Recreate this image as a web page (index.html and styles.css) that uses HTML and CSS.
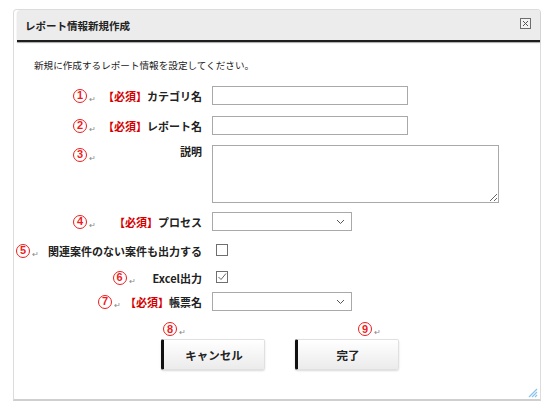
FILE: index.html
```html
<!DOCTYPE html>
<html lang="ja">
<head>
    <meta charset="UTF-8">
    <meta name="viewport" content="width=device-width, initial-scale=1.0">
    <title>レポート情報新規作成</title>
    <link rel="stylesheet" href="styles.css">
</head>
<body>
    <div class="dialog">
        <header class="dialog-header">
            <h1>レポート情報新規作成</h1>
            <span class="close-btn">
                <svg width="11" height="11" viewBox="0 0 11 11">
                    <rect x="0.5" y="0.5" width="10" height="10" fill="#f4f4f4" stroke="#6d6d6d"/>
                    <path d="M3 3 L8 8 M8 3 L3 8" stroke="#555" stroke-width="1"/>
                </svg>
            </span>
        </header>

        <div class="dialog-body">
            <p class="intro">新規に作成するレポート情報を設定してください。</p>

            <form class="report-form">
                <!-- row 1 -->
                <div class="label-cell spread">
                    <span class="note"><b>1</b><i>↵</i></span>
                    <label for="category"><em>【必須】</em>カテゴリ名</label>
                </div>
                <div class="control-cell">
                    <input type="text" id="category" class="text-input">
                </div>

                <!-- row 2 -->
                <div class="label-cell spread">
                    <span class="note"><b>2</b><i>↵</i></span>
                    <label for="reportName"><em>【必須】</em>レポート名</label>
                </div>
                <div class="control-cell">
                    <input type="text" id="reportName" class="text-input">
                </div>

                <!-- row 3 -->
                <div class="label-cell spread top">
                    <span class="note"><b>3</b><i>↵</i></span>
                    <label for="description">説明</label>
                </div>
                <div class="control-cell">
                    <textarea id="description" class="text-area"></textarea>
                </div>

                <!-- row 4 -->
                <div class="label-cell spread">
                    <span class="note"><b>4</b><i>↵</i></span>
                    <label for="process"><em>【必須】</em>プロセス</label>
                </div>
                <div class="control-cell">
                    <div class="select-box" id="process">
                        <svg width="9" height="6" viewBox="0 0 9 6"><path d="M1 1 L4.5 4.5 L8 1" fill="none" stroke="#555" stroke-width="1"/></svg>
                    </div>
                </div>

                <!-- row 5 -->
                <div class="label-cell">
                    <span class="note"><b>5</b><i>↵</i></span>
                    <label class="long-label">関連案件のない案件も出力する</label>
                </div>
                <div class="control-cell">
                    <span class="check-box"></span>
                </div>

                <!-- row 6 -->
                <div class="label-cell end">
                    <span class="note wide"><b>6</b><i>↵</i></span>
                    <label class="latin-label">Excel出力</label>
                </div>
                <div class="control-cell">
                    <span class="check-box">
                        <svg width="10" height="10" viewBox="0 0 10 10"><path d="M1.5 5 L4 7.5 L9 1.5" fill="none" stroke="#666" stroke-width="1"/></svg>
                    </span>
                </div>

                <!-- row 7 -->
                <div class="label-cell end">
                    <span class="note"><b>7</b><i>↵</i></span>
                    <label for="formName"><em>【必須】</em>帳票名</label>
                </div>
                <div class="control-cell">
                    <div class="select-box" id="formName">
                        <svg width="9" height="6" viewBox="0 0 9 6"><path d="M1 1 L4.5 4.5 L8 1" fill="none" stroke="#555" stroke-width="1"/></svg>
                    </div>
                </div>
            </form>

            <div class="button-row">
                <div class="button-group">
                    <span class="note small"><b>8</b><i>↵</i></span>
                    <button type="button" class="action-button">キャンセル</button>
                </div>
                <div class="button-group">
                    <span class="note small right"><b>9</b><i>↵</i></span>
                    <button type="button" class="action-button">完了</button>
                </div>
            </div>
        </div>

        <span class="resize-grip">
            <svg width="10" height="10" viewBox="0 0 10 10">
                <path d="M9 1 L1 9 M9 4 L4 9 M9 7 L7 9" stroke="#8cc4ec" stroke-width="1.2"/>
            </svg>
        </span>
    </div>
</body>
</html>
```

FILE: styles.css
```css
/* Page */
body {
    margin: 0;
    padding: 9px 6px 8px 13px;
    background-color: #ffffff;
    font-family: "Noto Sans CJK JP", "Noto Sans", sans-serif;
    color: #222;
}

/* Dialog frame */
.dialog {
    position: relative;
    width: 528px;
    height: 392px;
    border: 1px solid #dcdcdc;
    border-bottom: 2px solid #cfcfcf;
    border-radius: 4px 4px 0 0;
    background-color: #fff;
    box-sizing: border-box;
}
.dialog-header {
    display: flex;
    align-items: center;
    justify-content: space-between;
    height: 30px;
    margin-left: 3px;
    padding: 0 9px 0 8px;
    background-color: #ececec;
    border-radius: 4px 4px 0 0;
    border-bottom: 2px solid #1e1e1e;
    box-shadow: 0 1px 1px rgba(0, 0, 0, 0.35);
}
.dialog-header h1 {
    margin: 0;
    font-size: 10.5px;
    font-weight: bold;
    color: #222;
}
.close-btn {
    display: flex;
    margin-top: -3px;
}

/* Body */
.dialog-body {
    padding: 16px 0 0 2px;
}
.intro {
    margin: 0 0 14px 18px;
    font-size: 9.6px;
    color: #222;
}

/* Form grid */
.report-form {
    display: grid;
    grid-template-columns: 186px 1fr;
    grid-template-rows: 30px 29px 67px 29px 27px 24px 19px;
    column-gap: 10px;
}
.label-cell {
    display: flex;
    align-items: center;
    justify-content: flex-end;
    gap: 2px;
    height: 19px;
    font-size: 11px;
    font-weight: bold;
}
.label-cell.spread {
    justify-content: space-between;
    padding-left: 57px;
}
.label-cell.top label {
    margin-top: -7px;
}
.label-cell.end .note {
    margin-right: 2px;
}
.label-cell.end .note.wide {
    margin-right: 15px;
}
.label-cell label em {
    font-style: normal;
    color: #d40000;
}
.long-label {
    margin-left: auto;
}
.control-cell {
    display: flex;
    align-items: flex-start;
}

/* Red annotation numbers (circled digits) */
.note {
    display: flex;
    align-items: flex-end;
    white-space: nowrap;
}
.note b {
    display: flex;
    align-items: center;
    justify-content: center;
    width: 14px;
    height: 14px;
    border: 1.6px solid #ee1c1c;
    border-radius: 50%;
    box-sizing: border-box;
    color: #ee1c1c;
    font-family: "Liberation Sans", Arial, sans-serif;
    font-size: 11px;
    font-weight: bold;
    line-height: 1;
}
.note i {
    font-style: normal;
    font-weight: normal;
    font-size: 8px;
    line-height: 1;
    color: #888;
    margin-left: 2px;
}

/* Controls */
.text-input {
    width: 196px;
    height: 19px;
    margin: 0;
    padding: 0 4px;
    border: 1px solid #a9a9a9;
    border-radius: 0;
    box-sizing: border-box;
}
.text-area {
    width: 287px;
    height: 58px;
    margin: 0;
    padding: 2px;
    border: 1px solid #a9a9a9;
    border-radius: 0;
    box-sizing: border-box;
    resize: both;
}
.select-box {
    display: flex;
    align-items: center;
    justify-content: flex-end;
    width: 140px;
    height: 19px;
    padding-right: 6px;
    border: 1px solid #a9a9a9;
    box-sizing: border-box;
    background-color: #fff;
}
.check-box {
    display: flex;
    align-items: center;
    justify-content: center;
    width: 12px;
    height: 12px;
    margin: 3px 0 0 4px;
    border: 1px solid #6f6f6f;
    box-sizing: border-box;
    background-color: #fff;
}

/* Buttons */
.button-row {
    display: flex;
    justify-content: center;
    gap: 30px;
    margin-top: 11px;
    padding-left: 4px;
}
.button-group {
    display: flex;
    flex-direction: column;
}
.note.small {
    margin: 0 0 3px 2px;
}
.note.small.right {
    align-self: flex-end;
    margin-right: 18px;
}
.action-button {
    width: 104px;
    height: 31px;
    border: 1px solid #e0e0e0;
    border-left: 3px solid #111;
    border-radius: 2px;
    background: linear-gradient(#ffffff, #ebebeb);
    box-shadow: 0 1px 2px rgba(0, 0, 0, 0.15);
    font-family: "Noto Sans CJK JP", "Noto Sans", sans-serif;
    font-size: 11.5px;
    font-weight: bold;
    color: #222;
    cursor: pointer;
}

/* Resize grip */
.resize-grip {
    position: absolute;
    right: 2px;
    bottom: 1px;
    display: flex;
}
```
